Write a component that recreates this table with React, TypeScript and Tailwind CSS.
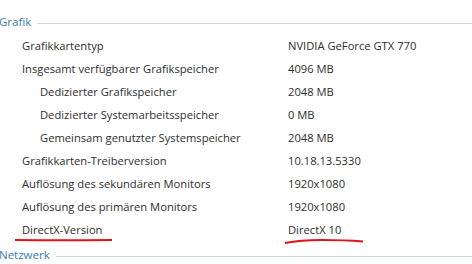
const rows: { label: string; value: string; sub?: boolean; mark?: boolean }[] = [
  { label: "Grafikkartentyp", value: "NVIDIA GeForce GTX 770" },
  { label: "Insgesamt verfügbarer Grafikspeicher", value: "4096 MB" },
  { label: "Dedizierter Grafikspeicher", value: "2048 MB", sub: true },
  { label: "Dedizierter Systemarbeitsspeicher", value: "0 MB", sub: true },
  { label: "Gemeinsam genutzter Systemspeicher", value: "2048 MB", sub: true },
  { label: "Grafikkarten-Treiberversion", value: "10.18.13.5330" },
  { label: "Auflösung des sekundären Monitors", value: "1920x1080" },
  { label: "Auflösung des primären Monitors", value: "1920x1080" },
  { label: "DirectX-Version", value: "DirectX 10", mark: true },
];

const GroupHeader = ({ title }: { title: string }) => (
  <div className="flex h-[22px] items-center gap-[6px] -ml-[1px]">
    <span className="text-[11.5px] text-[#3a7db5]">{title}</span>
    <div className="h-px flex-1 bg-[#d0d8de] mt-[2px]" />
  </div>
);

export default function App() {
  return (
    <div
      className="relative h-[264px] w-[472px] overflow-hidden bg-white pt-[11px] text-[11.2px] text-[#2e2e2e]"
      style={{ fontFamily: '"Open Sans", "Noto Sans", sans-serif' }}
    >
      <GroupHeader title="Grafik" />
      <div className="mt-[2px] flex flex-col">
        {rows.map((r) => (
          <div key={r.label} className="relative flex h-[23px] items-center">
            <span className={r.sub ? "w-[288px] pl-[40px]" : "w-[288px] pl-[22px]"}>
              {r.label}
            </span>
            <span>{r.value}</span>
            {r.mark && (
              <svg
                className="absolute left-0 top-[18px]"
                width="472"
                height="10"
                viewBox="0 0 472 10"
              >
                <path d="M15 3 Q60 3.5 112 3" stroke="#e0121a" strokeWidth="2" fill="none" />
                <path d="M285 6 Q300 3 322 3 Q345 3 363 4.5" stroke="#e0121a" strokeWidth="2" fill="none" />
              </svg>
            )}
          </div>
        ))}
      </div>
      <div className="mt-[2px]">
        <GroupHeader title="Netzwerk" />
      </div>
    </div>
  );
}
